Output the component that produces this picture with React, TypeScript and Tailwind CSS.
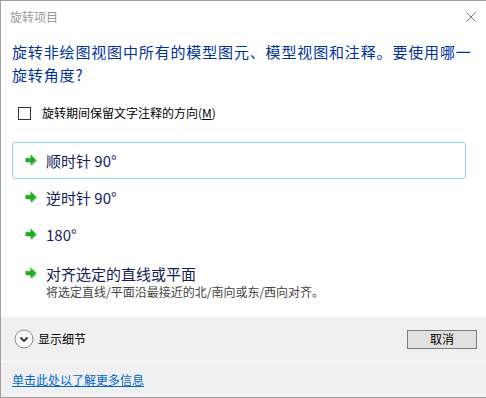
import React from "react";

const font = { fontFamily: '"Noto Sans CJK SC", "Noto Sans", sans-serif' };

function GreenArrow() {
  return (
    <svg width="13" height="13" viewBox="0 0 13 13" className="shrink-0">
      <path d="M1.6 5.6 H6.6 V1.4 L12.4 7 L6.6 12.6 V8.8 H1.6 Z" fill="#8a8a8a" opacity="0.5" />
      <path d="M0.5 4 H5.5 V0.4 L11.2 6 L5.5 11.6 V8 H0.5 Z" fill="#1fae1f" />
      <path d="M0.5 4 H5.5 V0.4 L11.2 6" fill="none" stroke="#72dc72" strokeWidth="0.7" />
    </svg>
  );
}

function CommandLink({
  label,
  note,
  selected,
}: {
  label: string;
  note?: string;
  selected?: boolean;
}) {
  return (
    <div
      className={
        "flex gap-[8px] pl-[12px] rounded-[3px] border " +
        (selected ? "border-[#8fd6f8] bg-white" : "border-transparent") +
        (note ? " items-start pt-[10px] pb-[4px]" : " items-center h-[37px]")
      }
    >
      <div className={note ? "pt-[3px]" : ""}>
        <GreenArrow />
      </div>
      <div className="flex flex-col">
        <span className="text-[15px] leading-[20px] text-[#151c55]">{label}</span>
        {note && <span className="text-[12px] leading-[16px] text-[#444]">{note}</span>}
      </div>
    </div>
  );
}

export default function App() {
  return (
    <div
      style={font}
      className="w-[486px] h-[398px] bg-white border-l border-t border-b border-[#a0a0a0] flex flex-col overflow-hidden"
    >
      {/* title bar */}
      <div className="h-[31px] flex items-center justify-between pl-[9px] pr-[10px]">
        <span className="text-[12px] text-[#9a9a9a]">旋转项目</span>
        <svg width="10" height="10" viewBox="0 0 10 10">
          <path d="M0.5 0.5 L9.5 9.5 M9.5 0.5 L0.5 9.5" stroke="#7a7a7a" strokeWidth="1" />
        </svg>
      </div>

      {/* content */}
      <div className="flex-1 flex flex-col px-[11px] pt-[8px]">
        <p className="text-[15px] leading-[23px] tracking-[0.85px] text-[#003399] w-[468px]">
          旋转非绘图视图中所有的模型图元、模型视图和注释。要使用哪一旋转角度?
        </p>

        <label className="mt-[19px] flex items-center gap-[11px] pl-[6px] h-[16px]">
          <span className="w-[13px] h-[13px] border border-[#333] bg-white" />
          <span className="text-[12px] text-black">
            旋转期间保留文字注释的方向(<span className="underline">M</span>)
          </span>
        </label>

        <div className="mt-[21px] flex flex-col w-[454px]">
          <CommandLink label="顺时针 90°" selected />
          <CommandLink label="逆时针 90°" />
          <CommandLink label="180°" />
          <CommandLink label="对齐选定的直线或平面" note="将选定直线/平面沿最接近的北/南向或东/西向对齐。" />
        </div>
      </div>

      {/* footer */}
      <div className="bg-[#f0f0f0]">
        <div className="h-[44px] flex items-center justify-between pl-[13px] pr-[9px]">
          <div className="flex items-center gap-[4px]">
            <svg width="20" height="20" viewBox="0 0 20 20">
              <circle cx="10" cy="10" r="9" fill="#fafafa" stroke="#8a8a8a" strokeWidth="1" />
              <path d="M6.5 8.5 L10 12 L13.5 8.5" fill="none" stroke="#333" strokeWidth="1.8" />
            </svg>
            <span className="text-[12px] text-black">显示细节</span>
          </div>
          <button className="w-[70px] h-[19px] bg-[#e1e1e1] border border-[#7a7a7a] text-[12px] leading-none text-black flex items-center justify-center">
            取消
          </button>
        </div>
        <div className="h-px bg-white" />
        <div className="h-[35px] flex items-center pl-[11px]">
          <span className="text-[12px] text-[#0066cc] underline">单击此处以了解更多信息</span>
        </div>
      </div>
    </div>
  );
}
